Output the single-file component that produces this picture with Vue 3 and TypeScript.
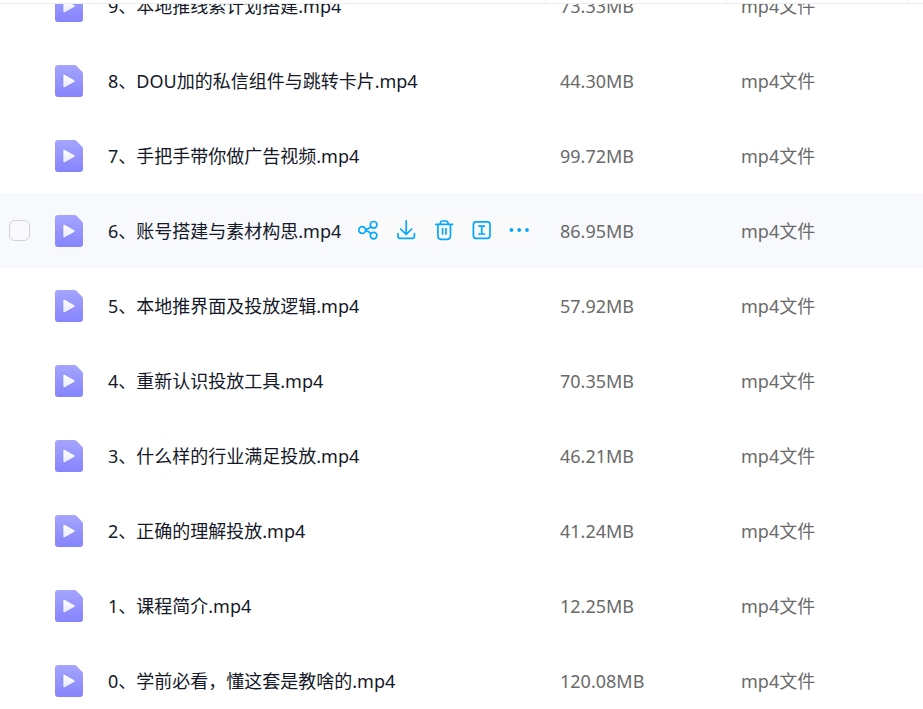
<script setup lang="ts">
import { ref } from 'vue'

interface VideoFile {
  name: string
  size: string
}

const files: VideoFile[] = [
  { name: '9、本地推线索计划搭建.mp4', size: '73.33MB' },
  { name: '8、DOU加的私信组件与跳转卡片.mp4', size: '44.30MB' },
  { name: '7、手把手带你做广告视频.mp4', size: '99.72MB' },
  { name: '6、账号搭建与素材构思.mp4', size: '86.95MB' },
  { name: '5、本地推界面及投放逻辑.mp4', size: '57.92MB' },
  { name: '4、重新认识投放工具.mp4', size: '70.35MB' },
  { name: '3、什么样的行业满足投放.mp4', size: '46.21MB' },
  { name: '2、正确的理解投放.mp4', size: '41.24MB' },
  { name: '1、课程简介.mp4', size: '12.25MB' },
  { name: '0、学前必看，懂这套是教啥的.mp4', size: '120.08MB' },
]

const activeRow = ref(3)
</script>

<template>
  <main class="page">
    <div class="head">
      <span class="head-name"></span>
      <span class="head-cell"></span>
      <span class="head-cell"></span>
      <span class="head-cell head-end"></span>
    </div>
    <div class="viewport">
      <table class="files">
        <colgroup>
          <col />
          <col class="col-size" />
          <col class="col-type" />
        </colgroup>
        <tbody>
          <tr
            v-for="(file, i) in files"
            :key="file.name"
            :class="{ active: i === activeRow }"
            @mouseenter="activeRow = i"
          >
            <td class="name-cell">
              <div class="name-row">
                <span class="pick">
                  <input v-if="i === activeRow" type="checkbox" class="check" :aria-label="file.name" />
                </span>
                <svg class="file-icon" viewBox="0 0 28 32" aria-hidden="true">
                  <defs>
                    <linearGradient :id="'doc' + i" x1="0" y1="0" x2="0" y2="1">
                      <stop offset="0" stop-color="#a5a5fd" />
                      <stop offset="1" stop-color="#8584fd" />
                    </linearGradient>
                    <linearGradient :id="'play' + i" x1="0" y1="0" x2="0" y2="1">
                      <stop offset="0" stop-color="#ffffff" />
                      <stop offset="1" stop-color="#e9e9ff" />
                    </linearGradient>
                  </defs>
                  <path
                    :fill="`url(#doc${i})`"
                    d="M3 0H19.5Q20.6 0 21.4 .8L27.2 6.8Q28 7.6 28 8.8V29Q28 32 25 32H3Q0 32 0 29V3Q0 0 3 0Z"
                  />
                  <path
                    fill="#6f6ee6"
                    opacity=".4"
                    d="M7.6 11.2V22Q7.8 24 9.7 23.4L19.2 18Q20.4 17 19 16Z"
                  />
                  <path
                    :fill="`url(#play${i})`"
                    d="M8.3 10.9Q8.3 9.1 9.9 10L19.2 15.2Q20.6 16 19.2 16.9L9.9 22.2Q8.3 23 8.3 21.2Z"
                  />
                </svg>
                <a href="#" class="name" @click.prevent>{{ file.name }}</a>
                <div v-if="i === activeRow" class="actions">
                  <button type="button" aria-label="分享">
                    <svg viewBox="0 0 22 22">
                      <circle cx="5.2" cy="11" r="3.4" />
                      <circle cx="16.6" cy="5.8" r="3.3" />
                      <circle cx="16.6" cy="16.6" r="3.3" />
                      <path d="M8.6 10.3Q12 9.8 13.9 7.8M8.6 11.7Q12 12.4 13.9 14.6" />
                    </svg>
                  </button>
                  <button type="button" aria-label="下载">
                    <svg viewBox="0 0 22 22">
                      <path d="M11.2 1.8V15.2M5.6 10L11.2 15.4L16.8 10M3 14.6V17.6Q3 19.4 5 19.4H17.4Q19.4 19.4 19.4 17.6V14.6" />
                    </svg>
                  </button>
                  <button type="button" aria-label="删除">
                    <svg viewBox="0 0 22 22">
                      <path d="M2.8 5.4H19.6M7 5.2L7.6 3.2Q8 2 9.2 2H13.2Q14.4 2 14.8 3.2L15.4 5.2M4.9 5.6V16.4Q4.9 20.3 8.6 20.3H13.8Q17.5 20.3 17.5 16.4V5.6M9.6 9.6V15M13 9.6V15" />
                    </svg>
                  </button>
                  <button type="button" aria-label="重命名">
                    <svg viewBox="0 0 22 22">
                      <rect x="2.4" y="2.8" width="16.6" height="16.6" rx="2.6" />
                      <path d="M7.9 7.1H13.5M7.9 15H13.5M10.7 7.1V15" />
                    </svg>
                  </button>
                  <button type="button" aria-label="更多">
                    <svg viewBox="0 0 22 22" class="dots">
                      <circle cx="2.4" cy="11" r="1.9" />
                      <circle cx="10.2" cy="11" r="1.9" />
                      <circle cx="18" cy="11" r="1.9" />
                    </svg>
                  </button>
                </div>
              </div>
            </td>
            <td class="meta">{{ file.size }}</td>
            <td class="meta">mp4文件</td>
          </tr>
        </tbody>
      </table>
    </div>
  </main>
</template>

<style>
body {
  margin: 0;
  background: #fff;
}
</style>

<style scoped>
.page {
  display: flex;
  flex-direction: column;
  height: 100vh;
  overflow: hidden;
  background: #fff;
  font-family: 'Noto Sans', 'Noto Sans CJK SC', sans-serif;
  font-size: 18px;
  line-height: 26px;
}

.head {
  display: flex;
  flex: none;
  height: 3px;
  border-bottom: 1px solid #ececee;
}

.head-name {
  flex: 1;
}

.head-cell {
  box-sizing: border-box;
  width: 181px;
  border-left: 1px solid #ececee;
}

.head-end {
  width: 16px;
}

.viewport {
  flex: 1;
  min-height: 0;
  overflow: hidden;
}

.files {
  width: 100%;
  margin-top: -36px;
  border-collapse: collapse;
  table-layout: fixed;
}

.col-size {
  width: 181px;
}

.col-type {
  width: 198px;
}

td {
  height: 75px;
  padding: 0;
}

.active td {
  background: #f7f9fc;
}

.name-row {
  display: flex;
  align-items: center;
}

.pick {
  display: flex;
  flex: none;
  width: 46px;
  padding-left: 9px;
}

.check {
  appearance: none;
  box-sizing: border-box;
  width: 21px;
  height: 21px;
  margin: 0;
  border: 1px solid #d0d2d6;
  border-radius: 6px;
  background: #fafafc;
}

.check:checked {
  background: #06a7ff;
}

.file-icon {
  flex: none;
  width: 28px;
  height: 32px;
}

.name {
  margin-left: 25px;
  color: #141828;
  text-decoration: none;
  white-space: nowrap;
}

.actions {
  display: flex;
  gap: 16px;
  margin-left: 10px;
  padding: 1px 0 3px 6px;
  background: #fafafa;
}

button {
  display: flex;
  padding: 0;
  border: 0;
  background: none;
  cursor: pointer;
}

button svg {
  width: 22px;
  height: 22px;
  fill: none;
  stroke: #06a7ff;
  stroke-width: 1.7;
  stroke-linecap: round;
  stroke-linejoin: round;
}

button .dots {
  fill: #06a7ff;
  stroke: none;
}

.meta {
  padding-left: 16px;
  color: #6a6a6a;
  white-space: nowrap;
}
</style>
